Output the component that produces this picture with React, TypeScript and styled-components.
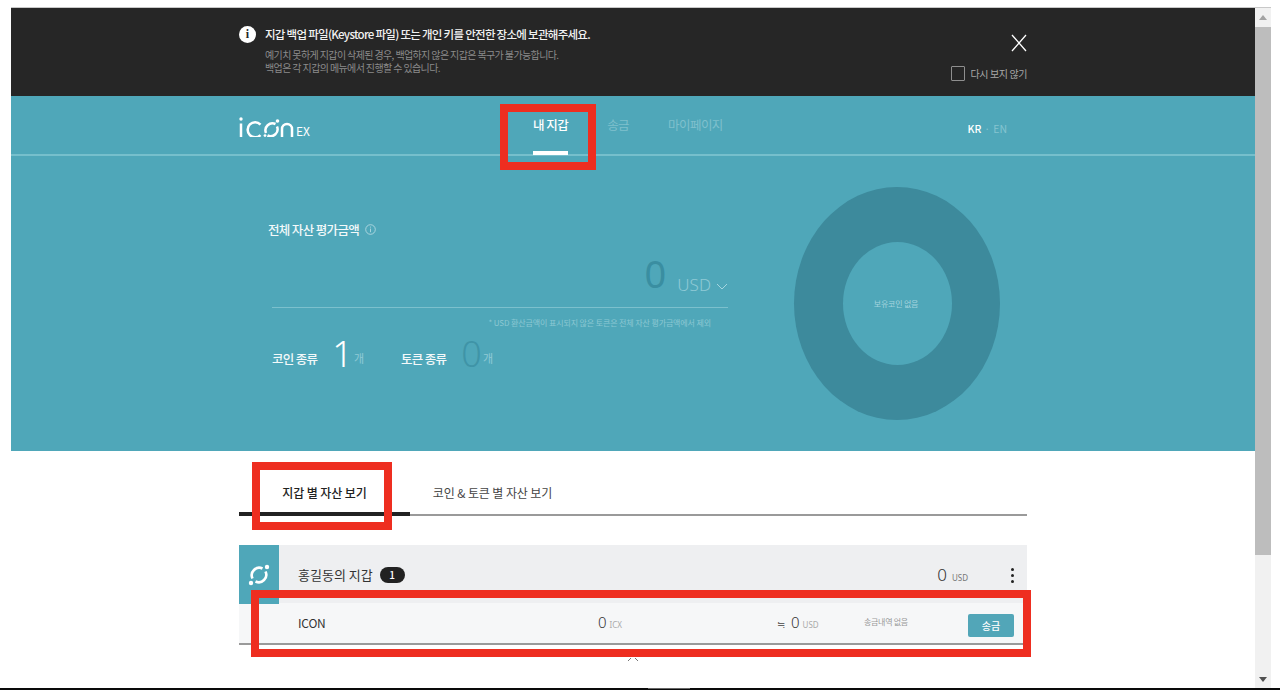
import React from 'react';
import styled, { createGlobalStyle } from 'styled-components';

const GlobalStyle = createGlobalStyle`
  html, body {
    margin: 0;
    padding: 0;
    background: #fff;
    overflow: hidden;
  }
  * {
    box-sizing: border-box;
  }
  body {
    font-family: "Noto Sans CJK KR", "Noto Sans", sans-serif;
  }
`;

const Page = styled.div`
  position: relative;
  width: 1280px;
  height: 700px;
  padding-top: 7px;
  background: #fff;
  overflow: hidden;
`;

const Window = styled.div`
  display: flex;
  height: 681px;
  margin: 0 9px 0 11px;
  border-top: 1px solid #c8c8c8;
`;

const BottomLine = styled.div`
  height: 2px;
  background: #0a0a0a;
`;

const PlayerMark = styled.div`
  position: absolute;
  left: 648px;
  top: 688px;
  width: 42px;
  height: 1px;
  background: #666;
`;

const Main = styled.div`
  width: 1244px;
  overflow: hidden;
`;

const Banner = styled.div`
  height: 88px;
  background: #262626;
`;

const Inner = styled.div`
  width: 788px;
  margin: 0 auto;
`;

const BannerInner = styled(Inner)`
  display: flex;
  justify-content: space-between;
  height: 100%;
  padding-top: 18px;
`;

const NoticeRow = styled.div`
  display: flex;
  gap: 9px;
`;

const InfoDot = styled.div`
  width: 17px;
  height: 17px;
  border-radius: 50%;
  background: #fff;
  color: #262626;
  font: 700 12px/17px "Liberation Serif", serif;
  text-align: center;
`;

const NoticeTitle = styled.div`
  color: #f2f2f2;
  font-size: 11.5px;
  font-weight: 500;
  line-height: 17px;
  letter-spacing: -0.72px;
  white-space: nowrap;
`;

const NoticeBody = styled.div`
  margin-top: 5px;
  color: #8b8b8b;
  font-size: 10px;
  line-height: 13px;
  letter-spacing: -0.62px;
`;

const BannerSide = styled.div`
  display: flex;
  flex-direction: column;
  align-items: flex-end;
`;

const CloseIcon = styled.svg`
  display: block;
  margin-top: 8px;
  width: 16px;
  height: 18px;
`;

const DismissRow = styled.div`
  display: flex;
  align-items: center;
  gap: 6px;
  margin-top: 14px;
  color: #a8a8a8;
  font-size: 10px;
  letter-spacing: -0.4px;
`;

const Checkbox = styled.span`
  width: 14px;
  height: 15px;
  border: 1px solid #8f8f8f;
  border-radius: 1px;
`;

const Hero = styled.div`
  height: 355px;
  background: #4fa7b9;
`;

const NavBar = styled.div`
  height: 60px;
  border-bottom: 2px solid #76bfcc;
`;

const NavInner = styled(Inner)`
  display: flex;
  align-items: flex-start;
  height: 58px;
`;

const Logo = styled.div`
  display: flex;
  align-items: flex-end;
  width: 257px;
  height: 58px;
  padding-bottom: 17px;
  gap: 2px;
  color: #fff;
`;

const LogoEx = styled.span`
  font-size: 12px;
  line-height: 13px;
`;

const NavList = styled.nav`
  display: flex;
  flex: 1;
  gap: 39px;
  padding-left: 37px;
`;

const NavItem = styled.a<{ $active?: boolean }>`
  position: relative;
  display: block;
  height: 59px;
  padding-top: 19px;
  color: ${p => (p.$active ? '#fff' : '#7fc0cd')};
  font-size: 12.5px;
  font-weight: ${p => (p.$active ? 500 : 400)};
  line-height: 19px;
  letter-spacing: -0.55px;

  &::after {
    content: '';
    display: ${p => (p.$active ? 'block' : 'none')};
    position: absolute;
    left: 0;
    right: 0;
    bottom: 0;
    height: 4px;
    background: #fff;
  }
`;

const Lang = styled.div`
  display: flex;
  gap: 3px;
  padding-top: 25px;
  margin-right: 20px;
  color: #85c4d0;
  font-size: 10.5px;
  line-height: 16px;
`;

const LangActive = styled.b`
  color: #fff;
  font-weight: 500;
`;

const HeroInner = styled(Inner)`
  display: flex;
  justify-content: space-between;
  padding: 31px 27px 0 29px;
`;

const Summary = styled.div`
  width: 460px;
`;

const SummaryTitle = styled.div`
  display: flex;
  align-items: center;
  gap: 6px;
  margin-top: 33px;
  color: #f3f9fa;
  font-size: 12.5px;
  font-weight: 500;
  line-height: 19px;
  letter-spacing: -0.65px;
`;

const Balance = styled.div`
  display: flex;
  align-items: flex-end;
  justify-content: flex-end;
  height: 60px;
  margin: 9px 0 0 4px;
  padding-bottom: 12px;
  border-bottom: 1px solid #7cc0cd;
`;

const BigZero = styled.span`
  margin-bottom: 2px;
  color: #3a8ea1;
  font-family: "Noto Sans", sans-serif;
  font-size: 38px;
  font-weight: 400;
  line-height: 40px;
`;

const Unit = styled.span`
  margin-left: 11px;
  color: #8fcad6;
  font-family: "Noto Sans", sans-serif;
  font-size: 17px;
  font-weight: 300;
  line-height: 20px;
`;

const Chevron = styled.svg`
  width: 12px;
  height: 7px;
  margin: 0 0 5px 5px;
`;

const FootNote = styled.div`
  margin-top: 9px;
  padding-right: 17px;
  color: #8cc8d3;
  font-size: 8px;
  line-height: 12px;
  letter-spacing: -0.12px;
  text-align: right;
`;

const Counts = styled.div`
  display: flex;
  align-items: center;
  margin-top: 3px;
  padding-left: 4px;
`;

const CountLabel = styled.span`
  margin-top: 8px;
  color: #f3f9fa;
  font-size: 12.5px;
  font-weight: 500;
  letter-spacing: -0.7px;
`;

const CountValue = styled.span<{ $muted?: boolean }>`
  margin-left: 15px;
  color: ${p => (p.$muted ? '#3f94a7' : '#fff')};
  font-family: "Noto Sans", sans-serif;
  font-size: 36px;
  font-weight: 300;
  line-height: 44px;
`;

const CountUnit = styled.span`
  margin: 8px 37px 0 1px;
  color: #8fcad6;
  font-size: 11px;
`;

const Donut = styled.div`
  display: flex;
  align-items: center;
  justify-content: center;
  width: 206px;
  height: 233px;
  border-radius: 50%;
  background: #3d8a9c;
`;

const DonutHole = styled.div`
  display: flex;
  align-items: center;
  justify-content: center;
  width: 109px;
  height: 123px;
  padding-right: 2px;
  border-radius: 50%;
  background: #4fa7b9;
  color: #a3d4de;
  font-size: 8px;
  letter-spacing: -0.2px;
`;

const Tabs = styled.div`
  display: flex;
  height: 65px;
  border-bottom: 2px solid #9a9a9a;
`;

const Tab = styled.div<{ $active?: boolean }>`
  position: relative;
  width: 171px;
  padding-top: 32px;
  color: ${p => (p.$active ? '#222' : '#444')};
  font-size: 12px;
  font-weight: ${p => (p.$active ? 500 : 400)};
  line-height: 19px;
  letter-spacing: -0.1px;
  text-align: center;
  white-space: nowrap;

  &::after {
    content: '';
    display: ${p => (p.$active ? 'block' : 'none')};
    position: absolute;
    left: 0;
    right: 0;
    bottom: -2px;
    height: 4px;
    background: #222;
  }
`;

const WideTab = styled(Tab)`
  width: 165px;
`;

const WalletHead = styled.div`
  display: flex;
  align-items: center;
  height: 59px;
  margin: 29px 0 -1px;
  background: #eeeff1;
`;

const WalletIcon = styled.div`
  display: flex;
  align-items: center;
  justify-content: center;
  width: 40px;
  height: 59px;
  background: #4fa7b9;
`;

const WalletName = styled.div`
  display: flex;
  align-items: center;
  gap: 7px;
  flex: 1;
  margin-left: 19px;
  color: #333;
  font-size: 13px;
`;

const Badge = styled.span`
  width: 25px;
  height: 16px;
  border-radius: 8px;
  background: #222;
  color: #fff;
  font-size: 10px;
  font-weight: 500;
  line-height: 16px;
  text-align: center;
`;

const Amount = styled.span`
  color: #333;
  font-family: "Noto Sans", sans-serif;
  font-size: 17px;
  font-weight: 300;
`;

const Small = styled.span`
  margin-left: 5px;
  color: #777;
  font-family: "Noto Sans", sans-serif;
  font-size: 8px;
`;

const FaintSmall = styled(Small)`
  margin-left: 3px;
  color: #aaa;
`;

const WalletTotal = styled.div`
  display: flex;
  align-items: baseline;
`;

const Kebab = styled.div`
  display: flex;
  flex-direction: column;
  gap: 3px;
  margin: 1px 13px 0 43px;
`;

const KebabDot = styled.i`
  width: 3px;
  height: 3px;
  border-radius: 50%;
  background: #222;
`;

const CoinRow = styled.div`
  display: grid;
  grid-template-columns: 300px 179px 87px 104px 46px;
  align-items: center;
  height: 42px;
  padding-left: 59px;
  background: #f6f7f8;
  border-bottom: 2px solid #9a9a9a;
  color: #333;
`;

const CoinName = styled.span`
  margin-bottom: 2px;
  font-size: 12px;
  letter-spacing: -0.2px;
`;

const CoinCell = styled.div`
  display: flex;
  align-items: baseline;
  margin-bottom: 2px;
`;

const RowAmount = styled(Amount)`
  font-size: 15px;
`;

const Swap = styled.span`
  margin-right: 6px;
  color: #666;
  font-size: 10px;
`;

const NoHistory = styled.span`
  margin-bottom: 4px;
  color: #999;
  font-size: 8px;
  letter-spacing: -0.3px;
`;

const SendButton = styled.button`
  width: 46px;
  height: 23px;
  margin-top: 4px;
  padding: 0;
  border: 0;
  border-radius: 2px;
  background: #52a6b8;
  color: #fff;
  font-family: inherit;
  font-size: 10px;
  font-weight: 500;
`;

const Scrollbar = styled.div`
  display: flex;
  flex-direction: column;
  align-items: center;
  width: 16px;
  background: #f1f1f1;
`;

const ScrollArrow = styled.svg`
  width: 16px;
  height: 19px;
  flex: none;
`;

const ScrollThumb = styled.div`
  width: 100%;
  height: 528px;
  background: #bdbdbd;
`;

const ScrollTrack = styled.div`
  flex: 1;
`;

const CollapseMark = styled.svg`
  position: absolute;
  left: 627px;
  top: 656px;
  width: 12px;
  height: 6px;
`;

const Highlight = styled.div<{ $x: number; $y: number; $w: number; $h: number }>`
  position: absolute;
  left: ${p => p.$x}px;
  top: ${p => p.$y}px;
  width: ${p => p.$w}px;
  height: ${p => p.$h}px;
  border: 8px solid #ee2e20;
`;

const App: React.FC = () => (
  <>
    <GlobalStyle />
    <Page>
      <Window>
        <Main>
          <Banner>
            <BannerInner>
              <NoticeRow>
                <InfoDot>i</InfoDot>
                <div>
                  <NoticeTitle>지갑 백업 파일(Keystore 파일) 또는 개인 키를 안전한 장소에 보관해주세요.</NoticeTitle>
                  <NoticeBody>
                    예기치 못하게 지갑이 삭제된 경우, 백업하지 않은 지갑은 복구가 불가능합니다.
                    <br />
                    백업은 각 지갑의 메뉴에서 진행할 수 있습니다.
                  </NoticeBody>
                </div>
              </NoticeRow>
              <BannerSide>
                <CloseIcon viewBox="0 0 16 18" fill="none" stroke="#fff" strokeWidth="1.3">
                  <path d="M1 1l14 16M15 1L1 17" />
                </CloseIcon>
                <DismissRow>
                  <Checkbox />
                  다시 보지 않기
                </DismissRow>
              </BannerSide>
            </BannerInner>
          </Banner>
          <Hero>
            <NavBar>
              <NavInner>
                <Logo>
                  <svg width="55" height="24" viewBox="0 0 55 24" fill="none" stroke="#fff" strokeWidth="2.5">
                    <path d="M2 10.5V24" />
                    <circle cx="2" cy="6" r="1.7" fill="#fff" stroke="none" />
                    <path d="M21.5 11.5a7.5 7.5 0 1 0 0 10.5" />
                    <path d="M27 20a7 7 0 0 1 9.5-9M38 13.5a7 7 0 0 1-9.5 9" />
                    <circle cx="38.5" cy="8" r="1.8" fill="#fff" stroke="none" />
                    <circle cx="26" cy="22.6" r="1.4" fill="#fff" stroke="none" />
                    <path d="M43 24v-8a5 5 0 0 1 10 0v8" />
                  </svg>
                  <LogoEx>EX</LogoEx>
                </Logo>
                <NavList>
                  <NavItem $active>내 지갑</NavItem>
                  <NavItem>송금</NavItem>
                  <NavItem>마이페이지</NavItem>
                </NavList>
                <Lang>
                  <LangActive>KR</LangActive>
                  <span>·</span>
                  <span>EN</span>
                </Lang>
              </NavInner>
            </NavBar>
            <HeroInner>
              <Summary>
                <SummaryTitle>
                  전체 자산 평가금액
                  <svg width="11" height="11" viewBox="0 0 11 11" fill="none" stroke="#bfe0e7" strokeWidth="0.8">
                    <circle cx="5.5" cy="5.5" r="4.8" />
                    <path d="M5.5 4.6v3.6M5.5 2.6v1" />
                  </svg>
                </SummaryTitle>
                <Balance>
                  <BigZero>0</BigZero>
                  <Unit>USD</Unit>
                  <Chevron viewBox="0 0 12 7" fill="none" stroke="#a5d5df" strokeWidth="1">
                    <path d="M1 1l5 5 5-5" />
                  </Chevron>
                </Balance>
                <FootNote>* USD 환산금액이 표시되지 않은 토큰은 전체 자산 평가금액에서 제외</FootNote>
                <Counts>
                  <CountLabel>코인 종류</CountLabel>
                  <CountValue>1</CountValue>
                  <CountUnit>개</CountUnit>
                  <CountLabel>토큰 종류</CountLabel>
                  <CountValue $muted>0</CountValue>
                  <CountUnit>개</CountUnit>
                </Counts>
              </Summary>
              <Donut>
                <DonutHole>보유코인 없음</DonutHole>
              </Donut>
            </HeroInner>
          </Hero>
          <Inner>
            <Tabs>
              <Tab $active>지갑 별 자산 보기</Tab>
              <WideTab>코인 &amp; 토큰 별 자산 보기</WideTab>
            </Tabs>
            <WalletHead>
              <WalletIcon>
                <svg width="26" height="26" viewBox="0 0 26 26" fill="none" stroke="#fff" strokeWidth="2.6">
                  <path d="M6.5 16.5a7.5 7.5 0 0 1 10-10M19.5 9.5a7.5 7.5 0 0 1-10 10" />
                  <circle cx="21" cy="5" r="2.2" fill="#fff" stroke="none" />
                  <circle cx="5" cy="21" r="2.2" fill="#fff" stroke="none" />
                </svg>
              </WalletIcon>
              <WalletName>
                홍길동의 지갑
                <Badge>1</Badge>
              </WalletName>
              <WalletTotal>
                <Amount>0</Amount>
                <Small>USD</Small>
              </WalletTotal>
              <Kebab>
                <KebabDot />
                <KebabDot />
                <KebabDot />
              </Kebab>
            </WalletHead>
            <CoinRow>
              <CoinName>ICON</CoinName>
              <CoinCell>
                <RowAmount>0</RowAmount>
                <FaintSmall>ICX</FaintSmall>
              </CoinCell>
              <CoinCell>
                <Swap>≒</Swap>
                <RowAmount>0</RowAmount>
                <FaintSmall>USD</FaintSmall>
              </CoinCell>
              <NoHistory>송금내역 없음</NoHistory>
              <SendButton>송금</SendButton>
            </CoinRow>
          </Inner>
        </Main>
        <Scrollbar>
          <ScrollArrow viewBox="0 0 16 19" fill="#a3a3a3">
            <path d="M8 7l4 5H4z" />
          </ScrollArrow>
          <ScrollThumb />
          <ScrollTrack />
          <ScrollArrow viewBox="0 0 16 19" fill="#505050">
            <path d="M8 13L4 8h8z" />
          </ScrollArrow>
        </Scrollbar>
      </Window>
      <BottomLine />
      <PlayerMark />
      <CollapseMark viewBox="0 0 12 6" fill="none" stroke="#777" strokeWidth="1">
        <path d="M1 5l3-3M11 5L8 2" />
      </CollapseMark>
      <Highlight $x={500} $y={104} $w={96} $h={66} />
      <Highlight $x={252} $y={462} $w={140} $h={68} />
      <Highlight $x={251} $y={590} $w={780} $h={67} />
    </Page>
  </>
);

export default App;
